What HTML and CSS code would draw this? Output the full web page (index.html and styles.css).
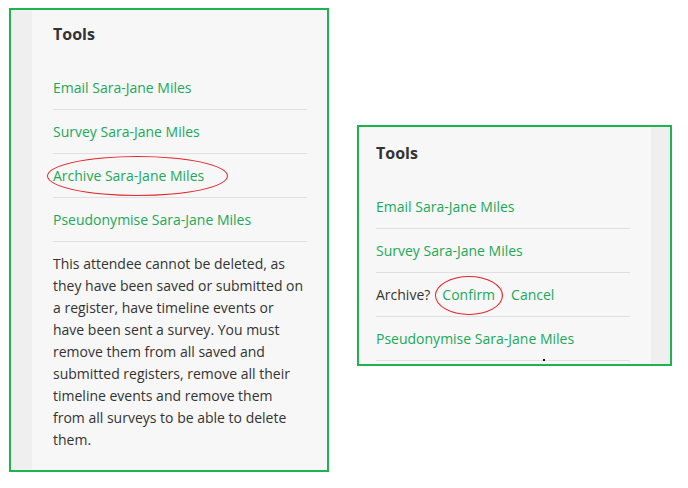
FILE: index.html
```html
<!DOCTYPE html>
<html lang="en">
<head>
<meta charset="utf-8">
<title>Tools</title>
<link rel="stylesheet" href="styles.css">
</head>
<body>
<div class="canvas">
  <section class="frame frame-left">
    <div class="strip"></div>
    <div class="panel">
      <h2 class="title">Tools</h2>
      <ul class="tools">
        <li><a href="#">Email Sara-Jane Miles</a></li>
        <li><a href="#">Survey Sara-Jane Miles</a></li>
        <li><a href="#" class="circled circled-wide">Archive Sara-Jane Miles</a></li>
        <li><a href="#">Pseudonymise Sara-Jane Miles</a></li>
      </ul>
      <p class="note">This attendee cannot be deleted, as they have been saved or submitted on a register, have timeline events or have been sent a survey. You must remove them from all saved and submitted registers, remove all their timeline events and remove them from all surveys to be able to delete them.</p>
    </div>
  </section>

  <section class="frame frame-right">
    <div class="panel panel-right">
      <h2 class="title">Tools</h2>
      <ul class="tools">
        <li><a href="#">Email Sara-Jane Miles</a></li>
        <li><a href="#">Survey Sara-Jane Miles</a></li>
        <li class="confirm-row"><span class="ask">Archive?</span><a href="#" class="confirm circled circled-small">Confirm</a><span class="divider"></span><a href="#" class="cancel">Cancel</a></li>
        <li><a href="#">Pseudonymise Sara-Jane Miles</a></li>
      </ul>
      <span class="dot"></span>
    </div>
    <div class="strip strip-right"></div>
  </section>
</div>
</body>
</html>
```

FILE: styles.css
```css
* { box-sizing: border-box; }

html, body {
  margin: 0;
  padding: 0;
  background: #ffffff;
}

body {
  font-family: "Open Sans", "Noto Sans", "Liberation Sans", sans-serif;
  font-size: 14px;
  color: #333333;
}

.canvas {
  display: flex;
  align-items: flex-start;
  padding: 8px 0 0 9px;
  gap: 28px;
}

.frame {
  display: flex;
  border: 2px solid #1db34f;
  background: #f7f7f7;
  overflow: hidden;
}

.frame-left {
  width: 320px;
  height: 464px;
}

.frame-right {
  width: 315px;
  height: 241px;
  margin-top: 117px;
}

.strip {
  width: 21px;
  flex: none;
  background: #efefef;
}

.strip-right {
  width: 19px;
}

.panel {
  flex: 1;
  padding: 13px 20px 0 21px;
  position: relative;
}

.panel-right {
  padding: 15px 21px 0 17px;
}

.title {
  margin: 0;
  font-size: 16px;
  font-weight: 700;
  line-height: 22px;
  color: #333333;
}

.tools {
  list-style: none;
  margin: 21px 0 0 0;
  padding: 0;
}

.tools li {
  padding: 11px 0 10px;
  line-height: 22px;
  border-bottom: 1px solid #e0e0e0;
  white-space: nowrap;
}

.tools a {
  color: #21a85a;
  text-decoration: none;
}

.circled {
  position: relative;
}

.circled::after {
  content: "";
  position: absolute;
  top: 50%;
  border: 1px solid #e3262a;
  border-radius: 50%;
}

.circled-wide::after {
  left: -6px;
  width: 179px;
  height: 38px;
  margin-top: -20px;
}

.circled-small::after {
  left: 3px;
  width: 66px;
  height: 37px;
  margin-top: -19px;
}

.confirm-row {
  display: flex;
  align-items: center;
}

.ask {
  color: #333333;
  margin-right: 2px;
}

.confirm {
  padding: 0 6px 0 10px;
}

.divider {
  width: 1px;
  height: 16px;
  background: #dddddd;
}

.cancel {
  padding-left: 9px;
}

.note {
  margin: 11px 0 0 0;
  line-height: 22px;
  color: #333333;
}

.dot {
  position: absolute;
  left: 184px;
  top: 232px;
  width: 2px;
  height: 2px;
  background: #111111;
}
```
